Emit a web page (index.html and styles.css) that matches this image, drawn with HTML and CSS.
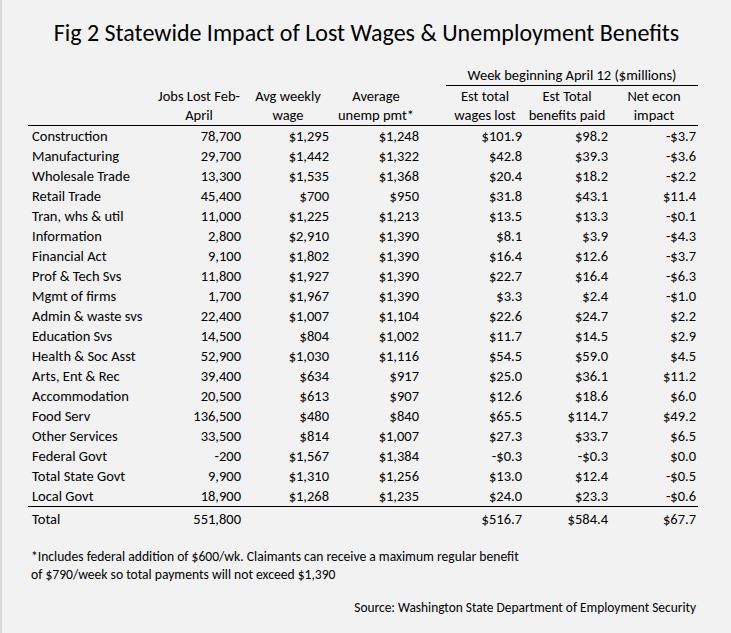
FILE: index.html
```html
<!DOCTYPE html>
<html>
<head>
<meta charset="utf-8">
<link rel="stylesheet" href="styles.css">
</head>
<body>
<div class="sheet">
  <h1 class="title">Fig 2 Statewide Impact of Lost Wages &amp; Unemployment Benefits</h1>
  <table class="tbl">
    <colgroup>
      <col class="c-label"><col class="c-jobs"><col class="c-avg"><col class="c-unemp"><col class="c-gap"><col class="c-est"><col class="c-ben"><col class="c-net">
    </colgroup>
    <thead>
      <tr class="group">
        <th></th><th></th><th></th><th></th><th></th>
        <th colspan="3" class="group-title">Week beginning April 12 ($millions)</th>
      </tr>
      <tr class="h1">
        <th></th><th>Jobs Lost Feb-</th><th>Avg weekly</th><th>Average</th><th></th><th>Est total</th><th>Est Total</th><th>Net econ</th>
      </tr>
      <tr class="h2">
        <th></th><th>April</th><th>wage</th><th>unemp pmt*</th><th></th><th>wages lost</th><th>benefits paid</th><th>impact</th>
      </tr>
    </thead>
    <tbody>
      <tr><td>Construction</td><td>78,700</td><td>$1,295</td><td>$1,248</td><td></td><td>$101.9</td><td>$98.2</td><td>-$3.7</td></tr>
      <tr><td>Manufacturing</td><td>29,700</td><td>$1,442</td><td>$1,322</td><td></td><td>$42.8</td><td>$39.3</td><td>-$3.6</td></tr>
      <tr><td>Wholesale Trade</td><td>13,300</td><td>$1,535</td><td>$1,368</td><td></td><td>$20.4</td><td>$18.2</td><td>-$2.2</td></tr>
      <tr><td>Retail Trade</td><td>45,400</td><td>$700</td><td>$950</td><td></td><td>$31.8</td><td>$43.1</td><td>$11.4</td></tr>
      <tr><td>Tran, whs &amp; util</td><td>11,000</td><td>$1,225</td><td>$1,213</td><td></td><td>$13.5</td><td>$13.3</td><td>-$0.1</td></tr>
      <tr><td>Information</td><td>2,800</td><td>$2,910</td><td>$1,390</td><td></td><td>$8.1</td><td>$3.9</td><td>-$4.3</td></tr>
      <tr><td>Financial Act</td><td>9,100</td><td>$1,802</td><td>$1,390</td><td></td><td>$16.4</td><td>$12.6</td><td>-$3.7</td></tr>
      <tr><td>Prof &amp; Tech Svs</td><td>11,800</td><td>$1,927</td><td>$1,390</td><td></td><td>$22.7</td><td>$16.4</td><td>-$6.3</td></tr>
      <tr><td>Mgmt of firms</td><td>1,700</td><td>$1,967</td><td>$1,390</td><td></td><td>$3.3</td><td>$2.4</td><td>-$1.0</td></tr>
      <tr><td>Admin &amp; waste svs</td><td>22,400</td><td>$1,007</td><td>$1,104</td><td></td><td>$22.6</td><td>$24.7</td><td>$2.2</td></tr>
      <tr><td>Education Svs</td><td>14,500</td><td>$804</td><td>$1,002</td><td></td><td>$11.7</td><td>$14.5</td><td>$2.9</td></tr>
      <tr><td>Health &amp; Soc Asst</td><td>52,900</td><td>$1,030</td><td>$1,116</td><td></td><td>$54.5</td><td>$59.0</td><td>$4.5</td></tr>
      <tr><td>Arts, Ent &amp; Rec</td><td>39,400</td><td>$634</td><td>$917</td><td></td><td>$25.0</td><td>$36.1</td><td>$11.2</td></tr>
      <tr><td>Accommodation</td><td>20,500</td><td>$613</td><td>$907</td><td></td><td>$12.6</td><td>$18.6</td><td>$6.0</td></tr>
      <tr><td>Food Serv</td><td>136,500</td><td>$480</td><td>$840</td><td></td><td>$65.5</td><td>$114.7</td><td>$49.2</td></tr>
      <tr><td>Other Services</td><td>33,500</td><td>$814</td><td>$1,007</td><td></td><td>$27.3</td><td>$33.7</td><td>$6.5</td></tr>
      <tr><td>Federal Govt</td><td>-200</td><td>$1,567</td><td>$1,384</td><td></td><td>-$0.3</td><td>-$0.3</td><td>$0.0</td></tr>
      <tr><td>Total State Govt</td><td>9,900</td><td>$1,310</td><td>$1,256</td><td></td><td>$13.0</td><td>$12.4</td><td>-$0.5</td></tr>
      <tr><td>Local Govt</td><td>18,900</td><td>$1,268</td><td>$1,235</td><td></td><td>$24.0</td><td>$23.3</td><td>-$0.6</td></tr>
    </tbody>
    <tfoot>
      <tr><td>Total</td><td>551,800</td><td></td><td></td><td></td><td>$516.7</td><td>$584.4</td><td>$67.7</td></tr>
    </tfoot>
  </table>
  <p class="note">*Includes federal addition of $600/wk. Claimants can receive a maximum regular benefit<br>of $790/week so total payments will not exceed $1,390</p>
  <p class="source">Source: Washington State Department of Employment Security</p>
</div>
</body>
</html>
```

FILE: styles.css
```css
html, body {
  margin: 0;
  padding: 0;
  background: #f2f2f2;
}

.sheet {
  width: 731px;
  height: 633px;
  box-sizing: border-box;
  border-left: 2px solid #dadada;
  background: #f2f2f2;
  color: #000;
  font-family: Carlito, Lato, "Liberation Sans", sans-serif;
  font-size: 14.5px;
  overflow: hidden;
}

.title {
  margin: 18px 0 18px 0;
  height: 30px;
  line-height: 30px;
  font-size: 24px;
  font-weight: normal;
  text-align: center;
}

.tbl {
  margin-left: 26px;
  border-collapse: collapse;
  table-layout: fixed;
  width: 670px;
}

.c-label { width: 125px; }
.c-jobs { width: 92px; }
.c-avg { width: 86px; }
.c-unemp { width: 90px; }
.c-gap { width: 25px; }
.c-est { width: 78px; }
.c-ben { width: 86px; }
.c-net { width: 88px; }

.tbl th, .tbl td {
  padding: 0 2px;
  height: 20px;
  line-height: 20px;
  white-space: nowrap;
  overflow: visible;
}

.tbl th {
  font-weight: normal;
  text-align: center;
}

.group th {
  height: 19px;
  line-height: 19px;
}

.group-title {
  border-bottom: 1px solid #000;
}

.h2 th {
  border-bottom: 1px solid #000;
  line-height: 19px;
  height: 19px;
}

.tbl td {
  text-align: right;
}

.tbl td:first-child {
  text-align: left;
  padding-left: 4px;
}

.tbl td:nth-child(2) {
  padding-right: 4px;
}

.tbl tbody tr:last-child td {
  border-bottom: 1px solid #000;
}

.tbl tfoot td {
  padding-top: 2px;
  height: 21px;
  line-height: 21px;
}

.note {
  margin: 18px 0 0 29px;
  font-size: 13.6px;
  line-height: 18px;
}

.source {
  margin: 15px 35px 0 0;
  font-size: 13.4px;
  line-height: 18px;
  text-align: right;
}
```
